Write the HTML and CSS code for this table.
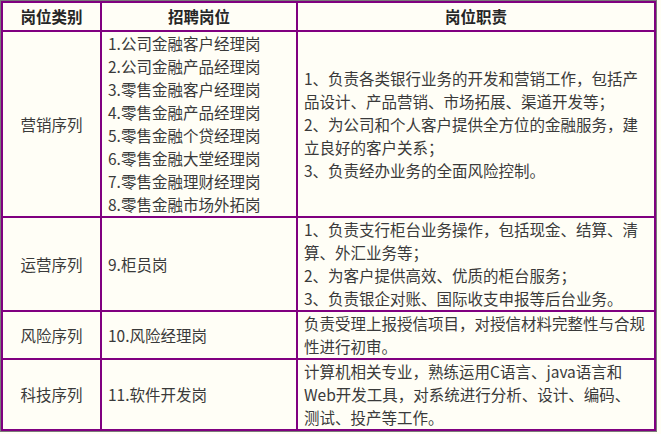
FILE: index.html
```html
<!DOCTYPE html>
<html lang="zh-CN">
<head>
<meta charset="utf-8">
<title>岗位职责</title>
<link rel="stylesheet" href="styles.css">
</head>
<body>
<div class="frame">
  <table class="jobs">
    <colgroup>
      <col class="c-cat">
      <col class="c-pos">
      <col class="c-duty">
    </colgroup>
    <thead>
      <tr>
        <th>岗位类别</th>
        <th>招聘岗位</th>
        <th>岗位职责</th>
      </tr>
    </thead>
    <tbody>
      <tr>
        <td class="cat">营销序列</td>
        <td class="pos">1.公司金融客户经理岗<br>2.公司金融产品经理岗<br>3.零售金融客户经理岗<br>4.零售金融产品经理岗<br>5.零售金融个贷经理岗<br>6.零售金融大堂经理岗<br>7.零售金融理财经理岗<br>8.零售金融市场外拓岗</td>
        <td class="duty">1、负责各类银行业务的开发和营销工作，包括产<br>品设计、产品营销、市场拓展、渠道开发等；<br>2、为公司和个人客户提供全方位的金融服务，建<br>立良好的客户关系；<br>3、负责经办业务的全面风险控制。</td>
      </tr>
      <tr>
        <td class="cat">运营序列</td>
        <td class="pos">9.柜员岗</td>
        <td class="duty">1、负责支行柜台业务操作，包括现金、结算、清<br>算、外汇业务等；<br>2、为客户提供高效、优质的柜台服务；<br>3、负责银企对账、国际收支申报等后台业务。</td>
      </tr>
      <tr>
        <td class="cat">风险序列</td>
        <td class="pos">10.风险经理岗</td>
        <td class="duty">负责受理上报授信项目，对授信材料完整性与合规<br>性进行初审。</td>
      </tr>
      <tr>
        <td class="cat">科技序列</td>
        <td class="pos">11.软件开发岗</td>
        <td class="duty">计算机相关专业，熟练运用C语言、java语言和<br>Web开发工具，对系统进行分析、设计、编码、<br>测试、投产等工作。</td>
      </tr>
    </tbody>
  </table>
</div>
</body>
</html>
```

FILE: styles.css
```css
html, body {
  margin: 0;
  padding: 0;
  background: #fffef6;
}

body {
  font-family: "Noto Sans CJK SC", "Microsoft YaHei", "Noto Sans", sans-serif;
  font-size: 15.5px;
  line-height: 23px;
  color: #3a3a3a;
}

.frame {
  display: inline-block;
  border: 1px solid #7a7a7a;
}

.jobs {
  border-collapse: separate;
  border-spacing: 0;
  border-top: 2px solid #800080;
  border-left: 2px solid #800080;
  table-layout: fixed;
  width: 655px;
}

.c-cat { width: 99px; }
.c-pos { width: 196px; }
.c-duty { width: 358px; }

.jobs th,
.jobs td {
  border-right: 2px solid #800080;
  border-bottom: 2px solid #800080;
  vertical-align: middle;
  white-space: nowrap;
}

.jobs th {
  font-weight: bold;
  color: #262626;
  text-align: center;
  padding: 2px 0;
}

.cat {
  text-align: center;
  padding: 0;
}

.pos {
  text-align: left;
  padding: 0 0 0 6px;
}

.duty {
  text-align: left;
  padding: 0 2px 0 6px;
}
```
